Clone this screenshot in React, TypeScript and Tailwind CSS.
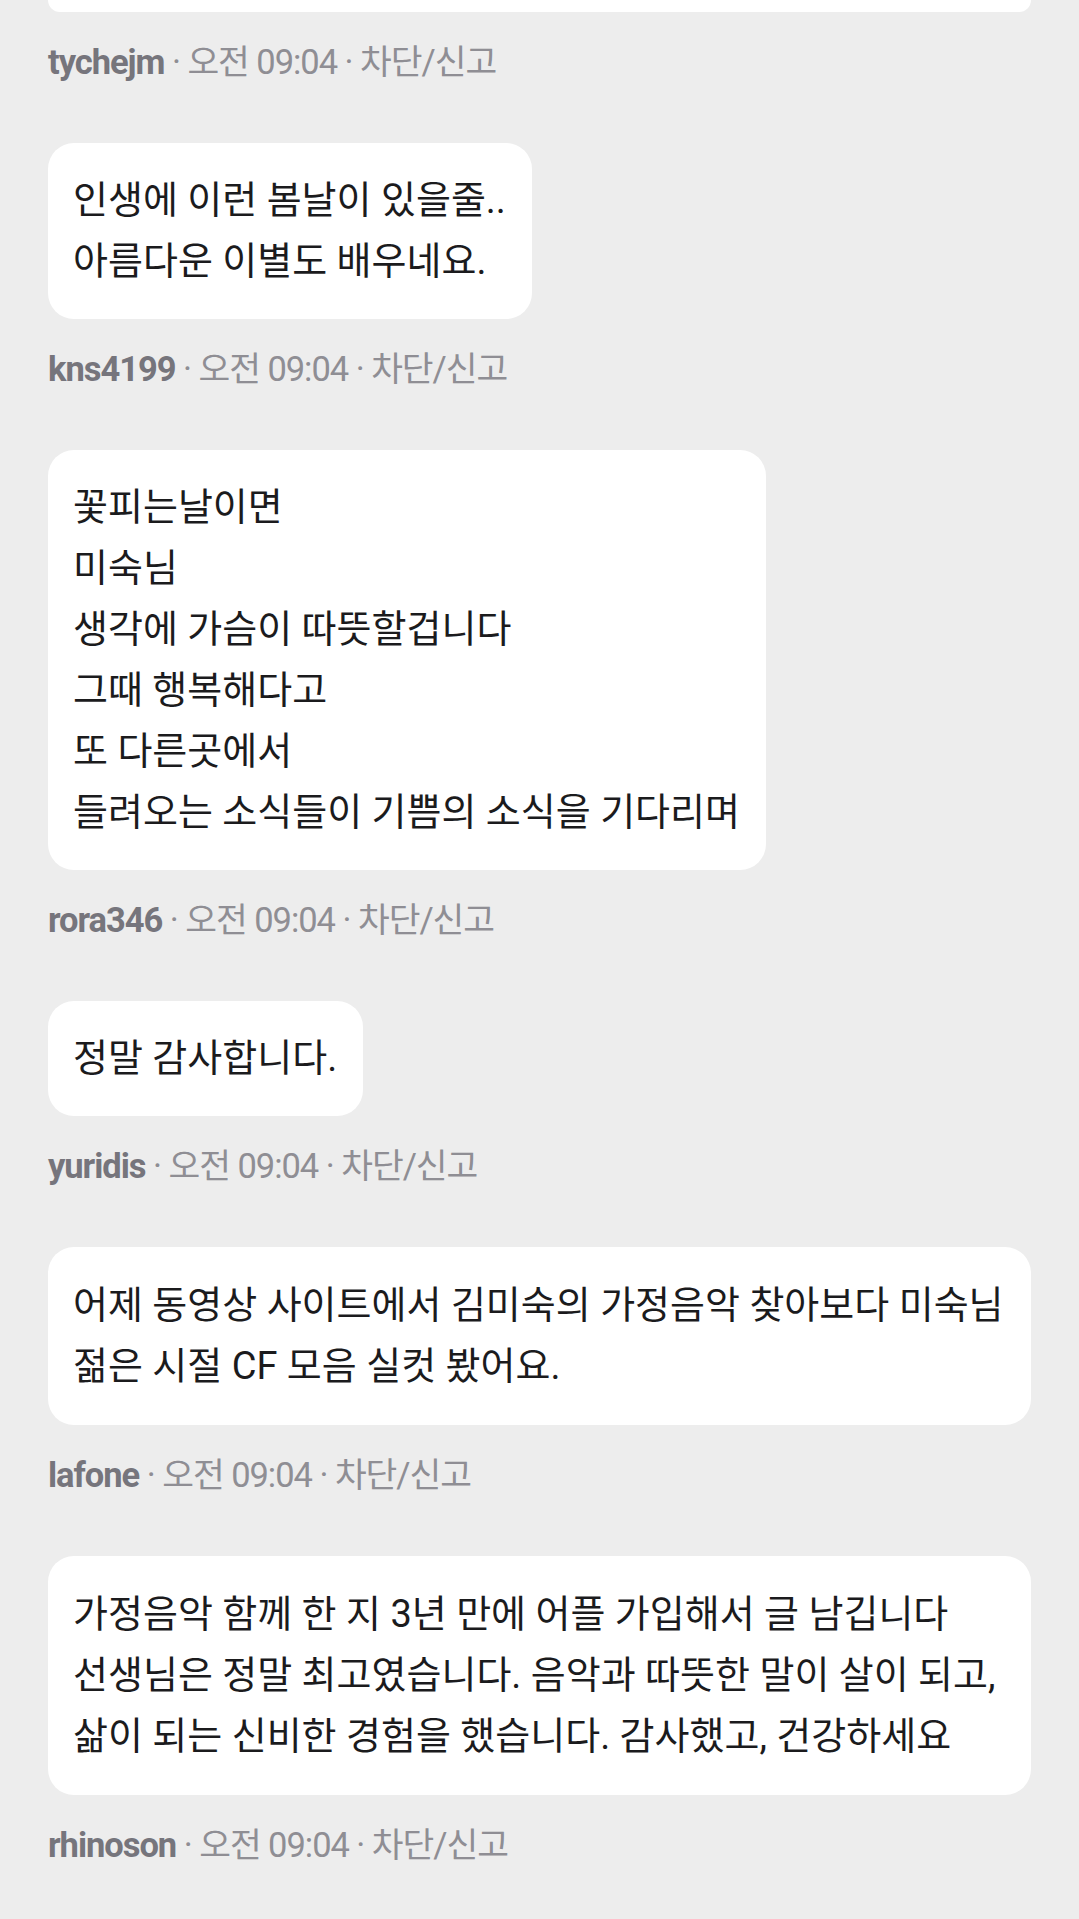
import React from 'react';

type Comment = {
  lines: string[];
  full?: boolean;
  user: string;
};

const comments: Comment[] = [
  { lines: ['인생에 이런 봄날이 있을줄..', '아름다운 이별도 배우네요.'], user: 'kns4199' },
  {
    lines: [
      '꽃피는날이면',
      '미숙님',
      '생각에 가슴이 따뜻할겁니다',
      '그때 행복해다고',
      '또 다른곳에서',
      '들려오는 소식들이 기쁨의 소식을 기다리며',
    ],
    user: 'rora346',
  },
  { lines: ['정말 감사합니다.'], user: 'yuridis' },
  {
    lines: ['어제 동영상 사이트에서 김미숙의 가정음악 찾아보다 미숙님', '젊은 시절 CF 모음 실컷 봤어요.'],
    full: true,
    user: 'lafone',
  },
  {
    lines: [
      '가정음악 함께 한 지 3년 만에 어플 가입해서 글 남깁니다',
      '선생님은 정말 최고였습니다. 음악과 따뜻한 말이 살이 되고,',
      '삶이 되는 신비한 경험을 했습니다. 감사했고, 건강하세요',
    ],
    full: true,
    user: 'rhinoson',
  },
];

const Meta = ({ user }: { user: string }) => (
  <div className="mt-[30px] mb-[61px] h-[40px] flex items-center text-[34.5px] leading-[40px] tracking-[-0.03em] whitespace-nowrap">
    <span className="font-bold text-[#76757c]">{user}</span>
    <span className="text-[#8f8e94]">&nbsp;· 오전 09:04 · 차단/신고</span>
  </div>
);

const Bubble = ({ c }: { c: Comment }) => (
  <div className={`${c.full ? 'self-stretch py-[28px]' : 'self-start py-[27px]'} bg-white rounded-[26px] pl-[25px] pr-[26px]`}>
    {c.lines.map((l, i) => (
      <div key={i} className="text-[38px] leading-[61px] text-[#1b1b1d] whitespace-nowrap">
        {l}
      </div>
    ))}
  </div>
);

export default function App() {
  return (
    <div
      className="min-h-[1919px] w-[1079px] bg-[#ededed] overflow-hidden px-[48px] flex flex-col"
      style={{ fontFamily: "Roboto, 'Noto Sans CJK KR', sans-serif" }}
    >
      {/* tail of the comment above */}
      <div className="self-stretch h-[12px] bg-white rounded-b-[26px]" />
      <Meta user="tychejm" />
      {comments.map((c, i) => (
        <React.Fragment key={i}>
          <Bubble c={c} />
          <Meta user={c.user} />
        </React.Fragment>
      ))}
    </div>
  );
}
